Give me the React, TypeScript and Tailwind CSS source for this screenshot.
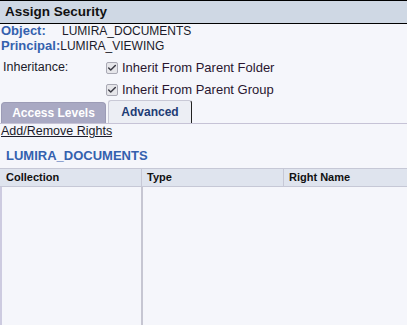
import { Check } from "lucide-react";

function Box() {
  return (
    <span className="flex h-[12px] w-[12px] items-center justify-center rounded-[2px] border border-[#a9a9b4] bg-[#e6e6ea]">
      <Check className="h-[10px] w-[10px] text-[#3a3a44]" strokeWidth={3.5} />
    </span>
  );
}

export default function App() {
  return (
    <div
      className="flex h-[325px] w-[407px] flex-col overflow-hidden bg-[#f5f6fb] text-[12px] text-[#1b1b2a]"
      style={{ fontFamily: '"Liberation Sans", Arial, sans-serif' }}
    >
      {/* title bar */}
      <div className="flex h-[24px] items-center border-y border-black bg-[#cfd8e4] pl-[5px] text-[13.5px] font-bold text-[#111]">
        Assign Security
      </div>

      {/* object / principal */}
      <div className="flex h-[16px] items-end pl-[1px]">
        <span className="w-[61px] text-[13px] font-bold text-[#3461ae]">Object:</span>
        <span>LUMIRA_DOCUMENTS</span>
      </div>
      <div className="flex h-[15px] items-end pl-[1px]">
        <span className="text-[13px] font-bold text-[#3461ae]">Principal:</span>
        <span>LUMIRA_VIEWING</span>
      </div>

      {/* inheritance */}
      <div className="mt-[5px] flex h-[15px] items-center pl-[3px]">
        <span className="w-[103px] text-[12.5px]">Inheritance:</span>
        <Box />
        <span className="ml-[4px] text-[13px] text-[#2a1630]">Inherit From Parent Folder</span>
      </div>
      <div className="mt-[7px] flex h-[15px] items-center pl-[106px]">
        <Box />
        <span className="ml-[4px] text-[13px] text-[#2a1630]">Inherit From Parent Group</span>
      </div>

      {/* tabs */}
      <div className="mt-[4px] flex h-[23px] items-end gap-[2px] border-b border-[#c6c3d6] pl-[1px]">
        <div className="flex h-[21px] w-[105px] items-center justify-center rounded-t-[4px] border border-b-0 border-[#9c9cb6] bg-[#a9a9c3] text-[12px] font-bold text-white">
          Access Levels
        </div>
        <div className="flex h-[23px] w-[84px] items-center justify-center rounded-t-[3px] border border-b-0 border-[#c9c9d6] border-r-[#222] bg-[#eceef4] text-[12px] font-bold text-[#1e3c74]">
          Advanced
        </div>
      </div>

      <div className="flex h-[15px] items-center pl-[1px]">
        <span className="text-[12.5px] underline">Add/Remove Rights</span>
      </div>

      <div className="mt-[9px] pl-[6px] text-[13px] font-bold leading-[15px] text-[#3461ae]">
        LUMIRA_DOCUMENTS
      </div>

      {/* table */}
      <div className="mt-[5px] flex flex-1 flex-col">
        <div className="grid h-[19px] grid-cols-[141px_142px_1fr] border-y border-[#c6c8d6] bg-[#dfe4ee] text-[11px] font-bold text-[#111]">
          <div className="flex items-center pl-[6px]">Collection</div>
          <div className="flex items-center border-l border-[#c6c8d6] pl-[5px]">Type</div>
          <div className="flex items-center border-l border-[#c6c8d6] pl-[5px]">Right Name</div>
        </div>
        <div className="grid flex-1 grid-cols-[141px_1fr]">
          <div className="border-l-2 border-[#cdcbe0]" />
          <div className="border-l-2 border-[#c6c6d2]" />
        </div>
      </div>
    </div>
  );
}
